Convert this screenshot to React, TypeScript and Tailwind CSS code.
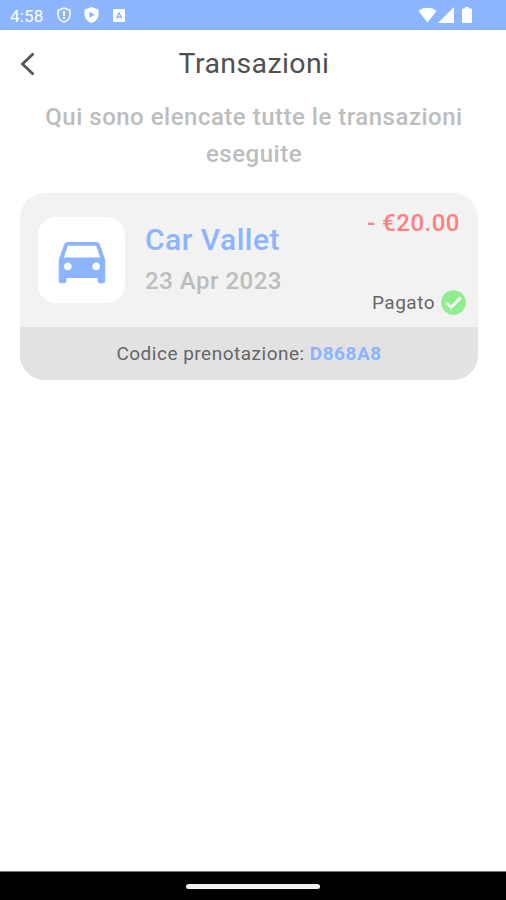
import { MdDirectionsCar } from 'react-icons/md';

const transactions = [
  {
    id: 1,
    title: 'Car Vallet',
    date: '23 Apr 2023',
    amount: '- €20.00',
    status: 'Pagato',
    code: 'D868A8',
  },
];

const StatusBar = () => (
  <div className="flex h-[30px] items-center bg-[#8cb4ff] text-white">
    <span className="ml-[10px] w-[47px] pt-px text-[17px] leading-[30px] tracking-[0.2px]">4:58</span>
    <svg className="h-4 w-[14px]" viewBox="0 0 14 16" fill="none">
      <path d="M7 1 L13 3.200 V7.500 C13 11 10.500 13.800 7 15 C3.500 13.800 1 11 1 7.500 V3.200 Z" stroke="currentColor" strokeWidth="1.500" />
      <path d="M7 4 V9.300 M7 10.300 V12" stroke="currentColor" strokeWidth="1.800" />
    </svg>
    <svg className="ml-[13px] h-4 w-[15px]" viewBox="0 0 15 16">
      <path d="M7.500 0 L14.500 2.500 V7.500 C14.500 11.500 11.500 14.800 7.500 16 C3.500 14.800 0.500 11.500 0.500 7.500 V2.500 Z" fill="currentColor" />
      <path d="M5.500 4.800 L10.800 7.800 L5.500 10.800 Z" fill="#8cb4ff" />
    </svg>
    <svg className="ml-[14px] h-[13px] w-3" viewBox="0 0 12 13">
      <rect width="12" height="13" rx="1" fill="currentColor" />
      <path d="M3.300 9.500 L6 3.800 L8.700 9.500 M4.300 8 H7.700" stroke="#8cb4ff" strokeWidth="1.400" fill="none" />
    </svg>
    <svg className="ml-auto h-4 w-[19px]" viewBox="0 0 19 16">
      <path d="M0.500 4 C5.500 -0.200 13.500 -0.200 18.500 4 L9.500 15.500 Z" fill="currentColor" />
    </svg>
    <svg className="ml-[1px] h-4 w-4" viewBox="0 0 16 16">
      <path d="M16 0 V16 H0 Z" fill="currentColor" />
    </svg>
    <svg className="mr-[34px] ml-2 h-4 w-[10px]" viewBox="0 0 10 16">
      <path d="M3 0 H7 V1.500 H9 Q10 1.500 10 2.500 V15 Q10 16 9 16 H1 Q0 16 0 15 V2.500 Q0 1.500 1 1.500 H3 Z" fill="currentColor" />
    </svg>
  </div>
);

const Header = () => (
  <header className="grid h-[69px] grid-cols-[60px_1fr_60px] items-center">
    <button type="button" aria-label="Indietro" className="pb-px pl-5">
      <svg className="h-6 w-4" viewBox="0 0 16 24" fill="none">
        <path d="M13.500 1.500 L2.500 12 L13.500 22.500" stroke="#555555" strokeWidth="2.800" />
      </svg>
    </button>
    <h1 className="pb-px pl-0.5 text-center text-[28.5px] tracking-[0.4px] text-[#505050]">Transazioni</h1>
  </header>
);

const CheckIcon = () => (
  <svg className="h-[25px] w-[25px]" viewBox="0 0 25 25" fill="none">
    <circle cx="12.500" cy="12.500" r="12.300" fill="#90ee90" />
    <path d="M5.300 12.800 L10.200 17.400 L19.700 7.500" stroke="white" strokeWidth="2.800" />
  </svg>
);

const TransactionCard = ({ transaction }: { transaction: (typeof transactions)[number] }) => (
  <div className="overflow-hidden rounded-[25px] bg-[#f2f2f2]">
    <div className="flex h-[134px] pl-[18px]">
      <div className="mt-6 flex h-[86px] w-[87px] items-center justify-center rounded-[18px] bg-white">
        <MdDirectionsCar className="h-[62px] w-[62px] text-[#8cb4ff]" />
      </div>
      <div className="ml-5 pt-[26px] font-medium">
        <h2 className="text-[30px] leading-[42px] tracking-[0.5px] text-[#8cb4ff]">{transaction.title}</h2>
        <p className="text-[24px] leading-[41px] tracking-[0.5px] text-[#bdbdbd]">{transaction.date}</p>
      </div>
      <div className="ml-auto flex flex-col items-end justify-between pt-[14px] pr-3 pb-[10px]">
        <p className="pr-1.5 text-[24px] leading-8 font-medium tracking-[0.5px] text-[#ff8080]">{transaction.amount}</p>
        <div className="flex items-center">
          <span className="mr-1.5 pt-px text-[19px] leading-7 tracking-[0.5px] text-[#666666]">{transaction.status}</span>
          <CheckIcon />
        </div>
      </div>
    </div>
    <div className="flex h-[53px] items-center justify-center bg-[#e2e2e2] pt-0.5 text-[19px] tracking-[0.5px] text-[#666666]">
      <span>
        Codice prenotazione: <strong className="font-bold text-[#8cb4ff]">{transaction.code}</strong>
      </span>
    </div>
  </div>
);

const App = () => (
  <div className="flex h-[900px] w-[506px] flex-col bg-white font-['Roboto',sans-serif]">
    <StatusBar />
    <Header />
    <main className="flex-1 pr-7 pl-5">
      <p className="-mr-2.5 px-4 text-center text-[24px] leading-[37px] font-medium tracking-[0.5px] text-[#bdbdbd]">
        Qui sono elencate tutte le transazioni eseguite
      </p>
      <div className="mt-5 space-y-5">
        {transactions.map(transaction => (
          <TransactionCard key={transaction.id} transaction={transaction} />
        ))}
      </div>
    </main>
    <div className="flex h-[29px] items-center justify-center border-t border-[#777777] bg-black">
      <div className="h-[5px] w-[134px] rounded-full bg-[#f0f0f0]" />
    </div>
  </div>
);

export default App;
